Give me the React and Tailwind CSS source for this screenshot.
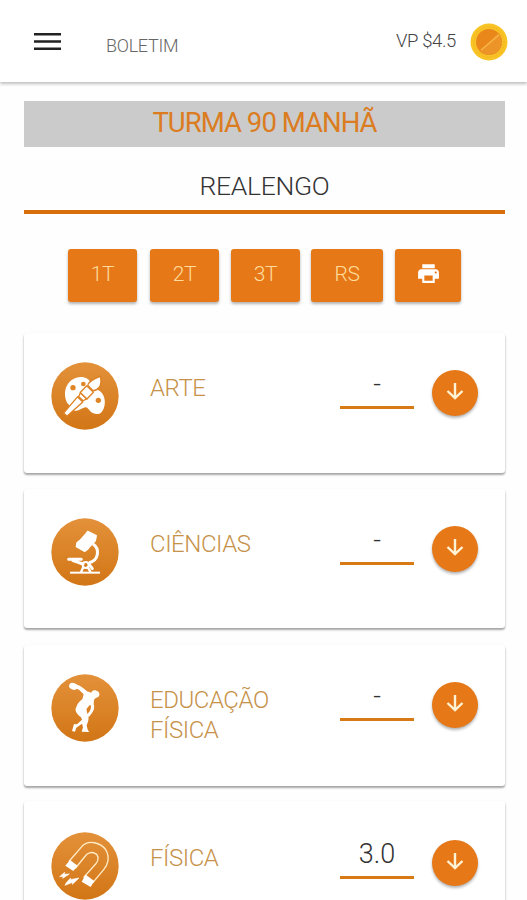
import React from "react";
import { MdPrint } from "react-icons/md";

const TABS = [
  { label: "1T", width: "w-[69px]" },
  { label: "2T", width: "w-[69px] ml-[13px]" },
  { label: "3T", width: "w-[69px] ml-3" },
  { label: "RS", width: "w-[72px] ml-[11px]" },
];

function PaletteIcon() {
  return (
    <g>
      <path
        d="M48 122 C36 98 42 68 62 54 C84 39 112 42 122 66 C126 82 140 80 152 92 C166 108 164 138 150 152 C140 160 126 156 118 148 C110 138 108 132 96 138 C86 142 82 148 70 146 Z"
        fill="#fff"
      />
      <circle cx="66" cy="77" r="8" fill="#df8526" />
      <circle cx="97" cy="66" r="7" fill="#df8526" />
      <circle cx="142" cy="115" r="8" fill="#df8526" />
      <g transform="translate(45 156) rotate(-46)" fill="#fff" stroke="#dd8223" strokeWidth="4" strokeLinejoin="round">
        <path d="M-3 -7 L61 -11 V11 L-3 7 Z" />
        <path d="M64 -9 L76 -13 V13 L64 9 Z" />
        <path d="M76 -14 H104 V14 H76 Z" />
        <path d="M107 -12 C116 -20 132 -14 154 -4 C144 5 140 16 126 16 C117 17 111 14 107 10 Z" />
      </g>
    </g>
  );
}

function MicroscopeIcon() {
  return (
    <g fill="none" stroke="#fff">
      <path
        d="M110 40 L136 53 L133 68 L115 87 L111 93 L101 100 L76 86 L78 74 L87 67 L105 47 Z"
        fill="#fff"
        strokeWidth="4"
        strokeLinejoin="round"
      />
      <path d="M126 78 C147 92 144 127 114 134" strokeWidth="9" />
      <path d="M53 124 H91 M66 128 L96 138 M115 140 L124 152" strokeWidth="9" strokeLinecap="round" />
      <path d="M98 145 L90 163 M109 145 L119 163" strokeWidth="7" />
      <circle cx="104" cy="141" r="9" strokeWidth="6" />
      <path d="M57 164 H147" strokeWidth="6" />
    </g>
  );
}

function DiscusIcon() {
  return (
    <g fill="#fff">
      <ellipse cx="67" cy="37" rx="13" ry="10" transform="rotate(20 67 37)" />
      <path d="M73 31 C88 34 97 43 108 52 L121 56 C122 47 134 46 142 53 C149 61 144 70 135 71 L129 77 L128 91 C134 103 123 120 114 128 L106 124 C118 111 123 101 117 92 L107 104 L109 119 C116 130 112 143 107 154 L110 167 L115 174 L92 173 L96 160 L93 149 L76 161 L72 173 L63 171 L69 150 L78 151 L93 137 L90 130 C73 116 71 108 76 99 C80 87 87 81 94 76 L98 61 L84 47 L71 42 Z" />
      <path d="M119 93 C120 102 114 110 108 116 L107 106 Z" fill="#db7f22" />
    </g>
  );
}

function MagnetIcon() {
  return (
    <g>
      <path
        d="M55 87 L93 43 C113 22 149 32 164 53 C178 76 170 99 158 113 L126 151 L99 135 L134 96 C144 85 144 69 132 64 C121 58 109 64 103 72 L74 108 Z"
        fill="none"
        stroke="#ffecc6"
        strokeWidth="4"
      />
      <path d="M57 84 L80 101 L67 117 L43 101 Z M104 128 L130 147 L119 165 L92 149 Z" fill="#fff" />
      <path d="M26 134 L41 121 L39 127 L55 126 L35 139 L37 133 Z M46 152 L59 138 L58 143 L84 138 L64 157 L65 151 L42 160 Z" fill="#fff" stroke="#fff" strokeWidth="2" />
    </g>
  );
}

const SUBJECTS = [
  { name: "ARTE", grade: "-", Icon: PaletteIcon, card: "h-[140px] pt-[29px]" },
  { name: "CIÊNCIAS", grade: "-", Icon: MicroscopeIcon, card: "h-[139px] pt-[29px]" },
  { name: "EDUCAÇÃO FÍSICA", grade: "-", Icon: DiscusIcon, card: "mt-px h-[141px] pt-[29px]" },
  { name: "FÍSICA", grade: "3.0", Icon: MagnetIcon, card: "-mt-px h-[140px] pt-[31px]" },
];

function Header() {
  return (
    <header className="flex h-[82px] shrink-0 items-start bg-white pl-[34px] pr-[19px] shadow-[0_2px_3px_rgba(0,0,0,0.25)]">
      <button aria-label="Menu">
        <svg className="mt-[32px] h-[19px] w-[27px]" viewBox="0 0 27 19" stroke="#222" strokeWidth="2.5">
          <path d="M0 2.2 H27 M0 9.5 H27 M0 16.8 H27" />
        </svg>
      </button>
      <h1 className="ml-[45px] mt-[34px] text-[18px] font-light leading-6 tracking-[-0.3px] text-[#666]">BOLETIM</h1>
      <span className="ml-auto mt-[29px] text-[18.5px] font-light leading-6 tracking-[-0.35px] text-[#444]">VP $4.5</span>
      <svg className="ml-[14px] mt-[23px] h-[38px] w-[38px]" viewBox="0 0 38 38">
        <circle cx="19" cy="19" r="18.5" fill="#f8c425" />
        <circle cx="19" cy="19" r="15" fill="none" stroke="#f3b522" strokeWidth="2" strokeDasharray="1 1.5" />
        <circle cx="19" cy="19" r="13" fill="#ea871b" />
        <path d="M28.2 9.8 A13 13 0 0 1 9.8 28.2 Z" fill="#ec9427" />
        <path d="M11 27 L29 12" stroke="#f7b64b" strokeWidth="1.3" />
      </svg>
    </header>
  );
}

function SubjectCard({ subject, index }) {
  const { name, grade, Icon, card } = subject;
  const gradientId = `badge-${index}`;

  return (
    <div
      className={`flex items-start rounded-[3px] bg-white pl-[27px] pr-[27px] shadow-[0_2px_2px_rgba(0,0,0,0.3),0_1px_3px_rgba(0,0,0,0.1)] ${card}`}
    >
      <svg className="h-[68px] w-[68px] shrink-0" viewBox="0 0 204 204">
        <defs>
          <linearGradient id={gradientId} x1="0" y1="0" x2="0" y2="1">
            <stop offset="0" stopColor="#e3913a" />
            <stop offset="1" stopColor="#d27616" />
          </linearGradient>
        </defs>
        <circle cx="102" cy="102" r="101" fill={`url(#${gradientId})`} />
        <Icon />
      </svg>
      <div className="ml-[31px] mt-[11px] w-[150px] text-[24px] font-light leading-[30px] tracking-[-0.45px] text-[#c6924a]">
        {name}
      </div>
      <div className="ml-auto mt-[5px] h-[42px] w-[74px] border-b-[3px] border-[#d77a16] text-center text-[27px] font-light leading-[34px] text-[#333]">
        {grade}
      </div>
      <button
        className="ml-[18px] mt-2 flex h-[46px] w-[46px] shrink-0 items-center justify-center rounded-full bg-[#e67817] shadow-[0_2px_3px_rgba(0,0,0,0.3)]"
        aria-label={`Abrir ${name}`}
      >
        <svg className="-mt-1 h-[18px] w-[18px]" viewBox="0 0 18 18" fill="none" stroke="#fff3d6" strokeWidth="2.4">
          <path d="M9 1 V16 M1.5 9 L9 16.2 L16.5 9" />
        </svg>
      </button>
    </div>
  );
}

export default function App() {
  return (
    <div className="flex h-[900px] w-[527px] flex-col overflow-hidden bg-[#fefefe] font-[Roboto,'Liberation_Sans',sans-serif]">
      <Header />
      <main className="flex flex-col pl-6 pr-[22px] pt-[19px]">
        <div className="h-[46px] bg-[#cbcbcb] text-center text-[27.5px] font-normal leading-[44px] tracking-[-0.95px] text-[#db7c20]">
          TURMA 90 MANHÃ
        </div>
        <div className="h-[67px] border-b-4 border-[#d96f0b] pt-[19px] text-center text-[26.5px] font-light leading-[39px] tracking-[-0.3px] text-[#333]">
          REALENGO
        </div>

        <div className="mt-[35px] flex pl-11">
          {TABS.map((tab) => (
            <button
              key={tab.label}
              className={`h-[53px] rounded-[3px] bg-[#e67817] pb-0.5 text-[21px] font-light tracking-[-0.3px] text-[#ffdc9c] shadow-[0_2px_3px_rgba(0,0,0,0.3)] ${tab.width}`}
            >
              {tab.label}
            </button>
          ))}
          <button
            className="ml-3 flex h-[53px] w-[66px] items-center justify-center rounded-[3px] bg-[#e67817] pb-1 text-white shadow-[0_2px_3px_rgba(0,0,0,0.3)]"
            aria-label="Imprimir"
          >
            <MdPrint size={25} />
          </button>
        </div>

        <div className="mt-[31px] flex flex-col gap-4">
          {SUBJECTS.map((subject, index) => (
            <SubjectCard key={subject.name} subject={subject} index={index} />
          ))}
        </div>
      </main>
    </div>
  );
}
